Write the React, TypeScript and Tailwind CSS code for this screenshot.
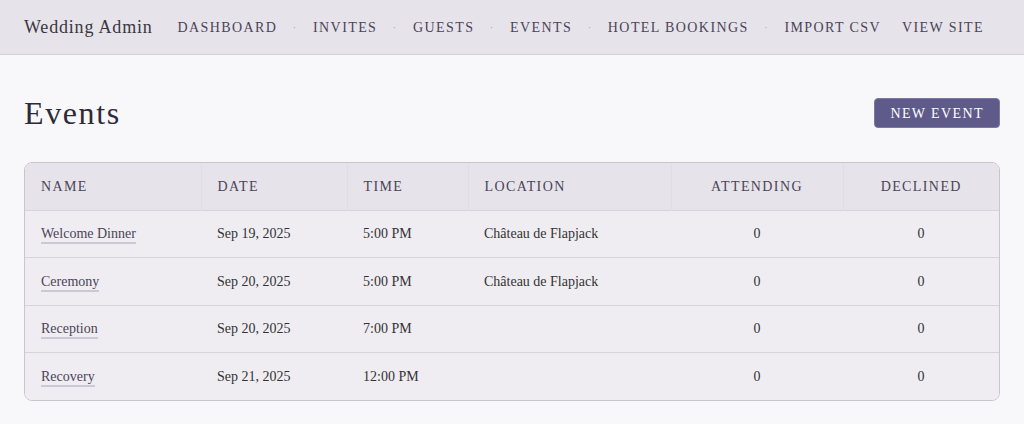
const NAV = ['Dashboard', 'Invites', 'Guests', 'Events', 'Hotel Bookings', 'Import CSV']

type EventRow = {
  name: string
  date: string
  time: string
  location: string
  attending: number
  declined: number
}

const EVENTS: EventRow[] = [
  { name: 'Welcome Dinner', date: 'Sep 19, 2025', time: '5:00 PM', location: 'Château de Flapjack', attending: 0, declined: 0 },
  { name: 'Ceremony', date: 'Sep 20, 2025', time: '5:00 PM', location: 'Château de Flapjack', attending: 0, declined: 0 },
  { name: 'Reception', date: 'Sep 20, 2025', time: '7:00 PM', location: '', attending: 0, declined: 0 },
  { name: 'Recovery', date: 'Sep 21, 2025', time: '12:00 PM', location: '', attending: 0, declined: 0 },
]

export default function App() {
  return (
    <div className="min-h-[424px] bg-[#f8f8fa] font-['Liberation_Serif',serif] text-[#333]">
      {/* top nav */}
      <header className="flex h-[55px] items-center border-b border-[#d3d0d8] bg-[#e6e3ea] px-6">
        <span className="text-[18px] tracking-[0.045em] text-[#3a3640]">Wedding Admin</span>
        <nav className="ml-[25px] flex items-center text-[14px] uppercase tracking-[0.1em] text-[#4b4458]">
          {NAV.map((item, i) => (
            <span key={item} className="flex items-center">
              {i > 0 && <span className="mx-[15.5px] text-[10px] text-[#a29cab]">·</span>}
              <a>{item}</a>
            </span>
          ))}
          <a className="ml-[21px]">View Site</a>
        </nav>
      </header>

      <main className="px-6 pt-[42px]">
        <div className="flex items-center justify-between">
          <h1 className="text-[32px] leading-none tracking-[0.05em] text-[#2f2a38]">Events</h1>
          <button className="h-[30px] rounded-[4px] border border-[#7d78a3] bg-[#5e5a8a] px-[15px] text-[14px] uppercase tracking-[0.1em] text-white">
            New Event
          </button>
        </div>

        <div className="mt-[33px] overflow-hidden rounded-[8px] border border-[#c9c5cf]">
          <table className="w-full table-fixed border-collapse text-[14px]">
            <colgroup>
              <col className="w-[176px]" />
              <col className="w-[146px]" />
              <col className="w-[121px]" />
              <col className="w-[203px]" />
              <col className="w-[172px]" />
              <col />
            </colgroup>
            <thead>
              <tr className="h-[47px] bg-[#e6e3ea] text-left uppercase tracking-[0.1em] text-[#4b4458]">
                <th className="border-r border-[#e0dde4] pl-4 font-normal">Name</th>
                <th className="border-r border-[#e0dde4] pl-4 font-normal">Date</th>
                <th className="border-r border-[#e0dde4] pl-4 font-normal">Time</th>
                <th className="border-r border-[#e0dde4] pl-4 font-normal">Location</th>
                <th className="border-r border-[#e0dde4] text-center font-normal">Attending</th>
                <th className="text-center font-normal">Declined</th>
              </tr>
            </thead>
            <tbody className="bg-[#efedf2]">
              {EVENTS.map((ev) => (
                <tr key={ev.name} className="h-[47.5px] border-t border-[#d6d3da]">
                  <td className="pl-4">
                    <a className="border-b-2 border-[#cdc8d6] pb-[1px] text-[#4b4458]">{ev.name}</a>
                  </td>
                  <td className="pl-4">{ev.date}</td>
                  <td className="pl-4">{ev.time}</td>
                  <td className="pl-4">{ev.location}</td>
                  <td className="text-center">{ev.attending}</td>
                  <td className="text-center">{ev.declined}</td>
                </tr>
              ))}
            </tbody>
          </table>
        </div>
      </main>
    </div>
  )
}
